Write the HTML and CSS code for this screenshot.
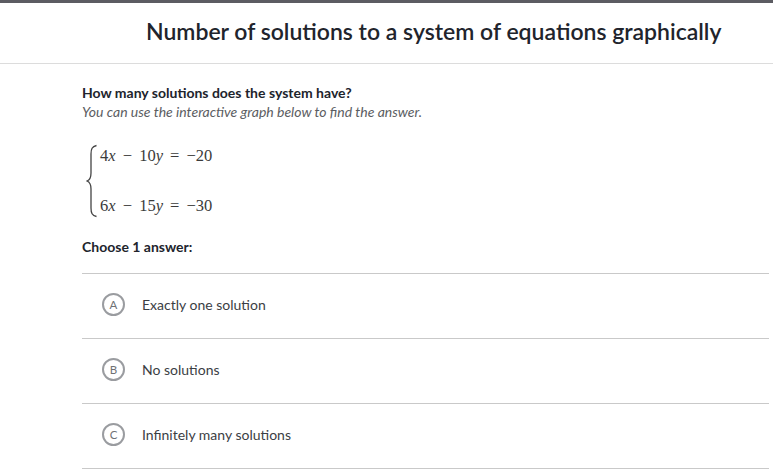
FILE: index.html
```html
<!DOCTYPE html>
<html>
<head>
<meta charset="utf-8">
<link rel="stylesheet" href="styles.css">
</head>
<body>
<div class="topbar"></div>
<header class="header">
  <h1 class="title">Number of solutions to a system of equations graphically</h1>
</header>
<main class="content">
  <p class="question">How many solutions does the system have?</p>
  <p class="hint">You can use the interactive graph below to find the answer.</p>
  <div class="system">
    <svg class="brace" width="12" height="74" viewBox="0 0 12 74">
      <path d="M10.5 1.5 C6 2.5 5 5 5 10 L5 29 C5 34 4 36 1 37 C4 38 5 40 5 45 L5 64 C5 69 6 71.5 10.5 72.5" fill="none" stroke="#444" stroke-width="1.3"/>
    </svg>
    <div class="eqs">
      <div class="eq">4<i>x</i> <span class="op">−</span> 10<i>y</i> <span class="op">=</span> −20</div>
      <div class="eq">6<i>x</i> <span class="op">−</span> 15<i>y</i> <span class="op">=</span> −30</div>
    </div>
  </div>
  <p class="choose">Choose 1 answer:</p>
  <ul class="choices">
    <li class="choice"><span class="letter">A</span><span class="ctext">Exactly one solution</span></li>
    <li class="choice"><span class="letter">B</span><span class="ctext">No solutions</span></li>
    <li class="choice"><span class="letter">C</span><span class="ctext">Infinitely many solutions</span></li>
  </ul>
</main>
</body>
</html>
```
FILE: styles.css
```css
* { box-sizing: border-box; }
html, body { margin: 0; padding: 0; background: #fff; }
body {
  font-family: Lato, "Liberation Sans", sans-serif;
  color: #21242c;
  width: 773px;
  height: 473px;
  overflow: hidden;
}
.topbar { height: 3px; background: #5c5c62; }
.header {
  height: 61px;
  border-bottom: 1px solid #dcdcdc;
  display: flex;
  align-items: center;
  padding-left: 146px;
}
.title {
  margin: 0;
  font-size: 23px;
  font-weight: 600;
  color: #21242c;
  padding-bottom: 4px;
}
.content { padding: 20px 4px 0 82px; }
.question {
  margin: 0;
  font-size: 14px;
  font-weight: 700;
  line-height: 18px;
}
.hint {
  margin: 1px 0 0;
  font-size: 14px;
  font-style: italic;
  line-height: 18px;
  color: #5b5d62;
}
.system {
  display: flex;
  align-items: stretch;
  margin-top: 23px;
  padding-left: 4px;
  height: 74px;
}
.brace { display: block; }
.eqs {
  display: flex;
  flex-direction: column;
  justify-content: space-between;
  padding: 2px 0 2px 2px;
}
.eq {
  font-family: "Liberation Serif", "DejaVu Serif", serif;
  font-size: 16.5px;
  color: #3b3b3b;
  line-height: 20px;
  white-space: nowrap;
}
.eq i { font-style: italic; }
.op { margin: 0 3px; }
.choose {
  margin: 20px 0 0;
  font-size: 14px;
  font-weight: 700;
  line-height: 18px;
}
.choices {
  list-style: none;
  margin: 17px 0 0;
  padding: 0;
  border-top: 1px solid #c9c9c9;
}
.choice {
  display: flex;
  align-items: center;
  height: 65px;
  border-bottom: 1px solid #c9c9c9;
  padding: 0 0 4px 20px;
}
.letter {
  width: 23px;
  height: 23px;
  border: 2px solid #9a9ca0;
  border-radius: 50%;
  display: flex;
  align-items: center;
  justify-content: center;
  font-size: 11.5px;
  color: #6f7175;
  flex: none;
}
.ctext {
  margin-left: 17px;
  font-size: 14px;
  color: #3b3e44;
}
```
